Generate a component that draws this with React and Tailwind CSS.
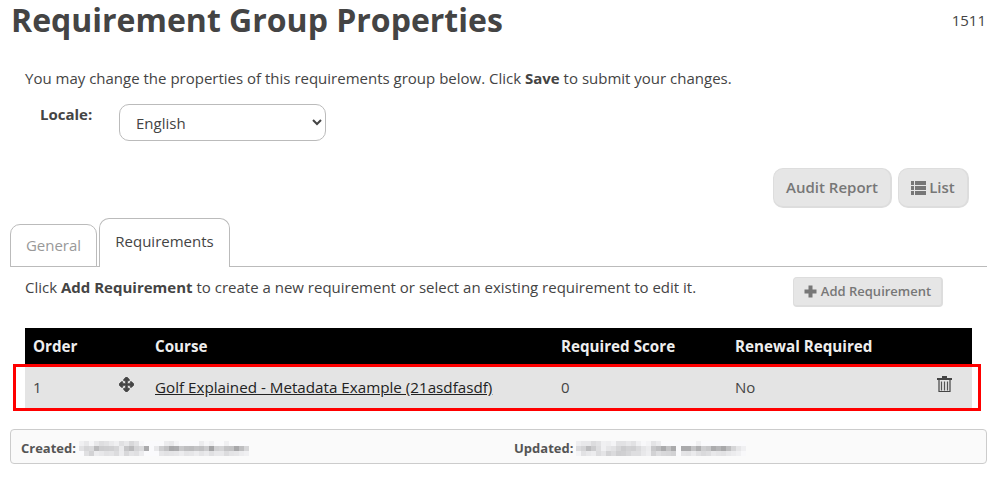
import React from "react";
import { FaArrowsAlt } from "react-icons/fa";

function Mosaic({ rows, className }) {
  const w = rows[0].length * 5;
  return (
    <svg className={className} width={w} height={15} viewBox={`0 0 ${w} 15`} aria-hidden="true">
      {rows.map((row, y) =>
        row.map((c, x) => (
          <rect key={`${x}-${y}`} x={x * 5} y={y * 5} width="5" height="5" fill={`rgb(${c},${c},${c + 2})`} />
        ))
      )}
    </svg>
  );
}

const created = [
  [240,232,246,232,222,226,234,240,224,232,216,226,246,250,250,250,250,236,232,244,250,250,250,250,236,246,240,250,250,240,250,250,250,250],
  [226,214,218,186,204,206,208,214,234,198,186,212,218,170,250,232,206,194,168,172,200,190,188,196,192,204,164,208,212,196,194,168,190,214],
  [250,224,210,236,232,226,228,220,236,216,228,224,236,250,250,250,230,226,228,230,236,228,230,236,228,234,224,232,232,220,228,230,236,240],
];
const updated = [
  [238,232,232,220,226,240,238,244,226,226,232,226,240,248,244,228,236,250,250,250,250,250,250,250,240,250,250,250,250,250,250,250,250,250],
  [220,212,188,204,222,240,230,226,214,204,210,208,218,230,236,200,190,170,194,170,250,170,170,196,176,206,200,172,182,168,190,214,230,240],
  [244,226,232,236,220,228,210,218,206,208,214,222,222,232,238,210,222,216,214,210,250,228,226,234,224,218,222,232,228,226,232,236,240,248],
];

export default function App() {
  return (
    <div className="relative h-[491px] w-[995px] overflow-hidden bg-white font-['Open_Sans',sans-serif] text-[15px] leading-[21px] text-[#444]">
      <div className="flex items-start justify-between pl-[11px] pr-[9px]">
        <h1 className="text-[32px] font-bold leading-[40px] text-[#444]">Requirement Group Properties</h1>
        <span className="mt-[10px] text-[15px] text-[#444]">1511</span>
      </div>

      <p className="ml-[25px] mt-[28px]">
        You may change the properties of this requirements group below. Click <b>Save</b> to submit your changes.
      </p>

      <div className="mt-[15px] flex items-start">
        <label className="ml-[40px] w-[79px] font-bold">Locale:</label>
        <select className="h-[37px] w-[207px] rounded-[10px] border border-[#bbb] bg-white pl-[12px] text-[15px] text-[#444]">
          <option>English</option>
        </select>
      </div>

      <div className="mt-[27px] flex justify-end gap-[6px] pr-[26px]">
        <button className="h-[40px] w-[119px] rounded-[10px] border border-[#ddd] border-b-2 border-r-2 bg-[#e6e6e6] text-[15px] font-semibold text-[#777]">
          Audit Report
        </button>
        <button className="flex h-[40px] w-[71px] items-center justify-center gap-[3px] rounded-[10px] border border-[#ddd] border-b-2 border-r-2 bg-[#e6e6e6] text-[15px] font-semibold text-[#777]">
          <svg width="15" height="14" viewBox="0 0 15 14" fill="currentColor" aria-hidden="true">
            <path d="M0 0h3v4H0z M4 0h11v4H4z M0 5h3v4H0z M4 5h11v4H4z M0 10h3v4H0z M4 10h11v4H4z" />
          </svg>
          List
        </button>
      </div>

      <div className="mt-[10px] ml-[10px] mr-[8px] flex h-[49px] items-end gap-[2px] border-b border-[#bbb]">
        <div className="-mb-px flex h-[43px] w-[87px] items-center justify-center rounded-t-[10px] border border-[#bbb] bg-white text-[15px] text-[#999]">
          General
        </div>
        <div className="-mb-px flex h-[49px] w-[131px] items-center justify-center rounded-t-[10px] border border-b-0 border-[#bbb] bg-white pb-[3px] text-[15px] text-[#444]">
          Requirements
        </div>
      </div>

      <div className="flex items-start justify-between pl-[25px] pr-[52px]">
        <p className="mt-[10px]">
          Click <b>Add Requirement</b> to create a new requirement or select an existing requirement to edit it.
        </p>
        <button className="mt-[10px] flex h-[30px] w-[150px] items-center justify-center gap-[4px] rounded-[4px] border border-[#ddd] border-b-2 border-r-2 bg-[#e6e6e6] text-[13px] font-semibold text-[#777]">
          <svg width="13" height="13" viewBox="0 0 13 13" fill="currentColor" aria-hidden="true">
            <path d="M4.5 0.5h4v4h4v4h-4v4h-4v-4h-4v-4h4z" />
          </svg>
          Add Requirement
        </button>
      </div>

      <div className="ml-[25px] mt-[21px] w-[947px]">
        <div className="flex h-[37px] items-center bg-black text-[15.2px] font-bold text-[#eee]">
          <span className="w-[121px] pl-[8px]">Order</span>
          <span className="w-[406px] pl-[9px]">Course</span>
          <span className="w-[175px] pl-[9px]">Required Score</span>
          <span className="pl-[8px]">Renewal Required</span>
        </div>
        <div className="mt-[1px] flex h-[42px] items-center bg-[#e4e4e4] text-[15px] text-[#444]">
          <span className="w-[87px] pl-[8px]">1</span>
          <span className="w-[34px] pl-[7px]">
            <FaArrowsAlt className="mb-[5px] h-[15px] w-[15px]" stroke="currentColor" strokeWidth="30" />
          </span>
          <span className="w-[406px] pl-[9px]"><a className="text-[15.2px] text-[#222] underline" href="#">Golf Explained - Metadata Example (21asdfasdf)</a></span>
          <span className="w-[175px] pl-[9px]">0</span>
          <span className="w-[202px] pl-[8px]">No</span>
          <svg className="mb-[6px] ml-[8px]" width="15" height="16" viewBox="0 0 15 16" aria-hidden="true">
            <path d="M5 0h5v2H5z M0 2h15v2H0z" fill="#444" />
            <path d="M5.5 0.5v2 M9.5 0.5v2" stroke="#444" />
            <path d="M2 4v11.5h11V4" fill="none" stroke="#444" strokeWidth="1.2" />
            <path d="M4.5 5.5v9 M7.5 5.5v9 M10.5 5.5v9" stroke="#555" strokeWidth="1.2" />
          </svg>
        </div>
      </div>

      <div className="ml-[10px] mt-[21px] flex h-[35px] w-[977px] items-center rounded-[4px] border border-[#ccc] bg-[#fafafa] pt-[4px] text-[13px] font-bold text-[#555]">
        <div className="flex w-[503px] items-center gap-[3px] pl-[10px]">
          <span>Created:</span>
          <Mosaic rows={created} />
        </div>
        <div className="flex items-center gap-[3px]">
          <span>Updated:</span>
          <Mosaic rows={updated} />
        </div>
      </div>

      <div className="absolute left-[13px] top-[364px] h-[47px] w-[968px] border-[3px] border-[#f00]" />
    </div>
  );
}
